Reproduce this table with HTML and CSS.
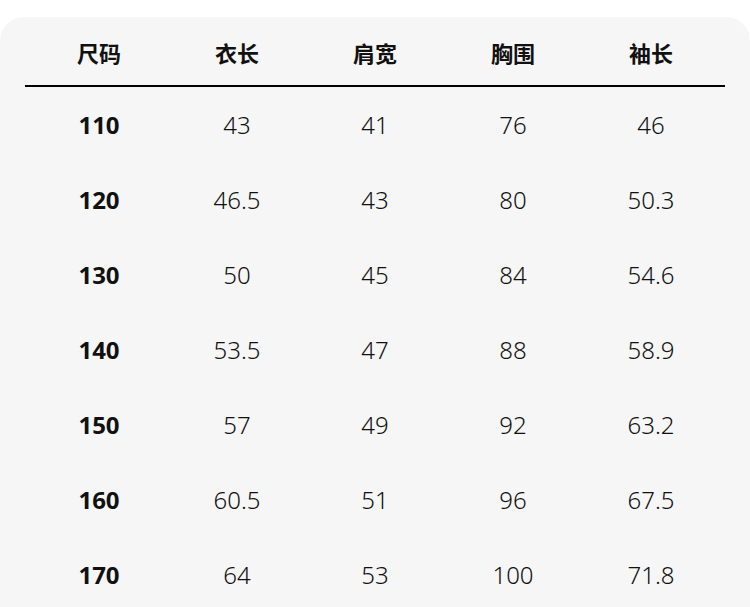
FILE: index.html
```html
<!DOCTYPE html>
<html lang="zh">
<head>
<meta charset="utf-8">
<link rel="stylesheet" href="styles.css">
</head>
<body>
<div class="card">
  <div class="row head">
    <div class="cell">尺码</div>
    <div class="cell">衣长</div>
    <div class="cell">肩宽</div>
    <div class="cell">胸围</div>
    <div class="cell">袖长</div>
  </div>
  <div class="rule"></div>
  <div class="row"><div class="cell size">110</div><div class="cell">43</div><div class="cell">41</div><div class="cell">76</div><div class="cell">46</div></div>
  <div class="row"><div class="cell size">120</div><div class="cell">46.5</div><div class="cell">43</div><div class="cell">80</div><div class="cell">50.3</div></div>
  <div class="row"><div class="cell size">130</div><div class="cell">50</div><div class="cell">45</div><div class="cell">84</div><div class="cell">54.6</div></div>
  <div class="row"><div class="cell size">140</div><div class="cell">53.5</div><div class="cell">47</div><div class="cell">88</div><div class="cell">58.9</div></div>
  <div class="row"><div class="cell size">150</div><div class="cell">57</div><div class="cell">49</div><div class="cell">92</div><div class="cell">63.2</div></div>
  <div class="row"><div class="cell size">160</div><div class="cell">60.5</div><div class="cell">51</div><div class="cell">96</div><div class="cell">67.5</div></div>
  <div class="row"><div class="cell size">170</div><div class="cell">64</div><div class="cell">53</div><div class="cell">100</div><div class="cell">71.8</div></div>
</div>
</body>
</html>
```
FILE: styles.css
```css
html, body {
  margin: 0;
  padding: 0;
  background: #ffffff;
  overflow: hidden;
}
body {
  font-family: "Noto Sans", "Noto Sans CJK SC", sans-serif;
  color: #111111;
}
.card {
  margin-top: 17px;
  background: #f6f6f6;
  border-radius: 24px;
  padding: 0 25px 30px;
  height: 620px;
  box-sizing: border-box;
}
.row {
  display: grid;
  grid-template-columns: repeat(5, 138px);
  padding: 0 5px;
  height: 75px;
  align-items: center;
}
.row.head {
  height: 68px;
  padding-top: 2px;
  box-sizing: border-box;
}
.cell {
  text-align: center;
  font-size: 24px;
  line-height: 30px;
  font-weight: 300;
}
.head .cell {
  font-family: "Noto Sans CJK SC", sans-serif;
  font-size: 22px;
  font-weight: 700;
}
.cell.size {
  font-weight: 700;
}
.rule {
  height: 2px;
  background: #000000;
}
```
